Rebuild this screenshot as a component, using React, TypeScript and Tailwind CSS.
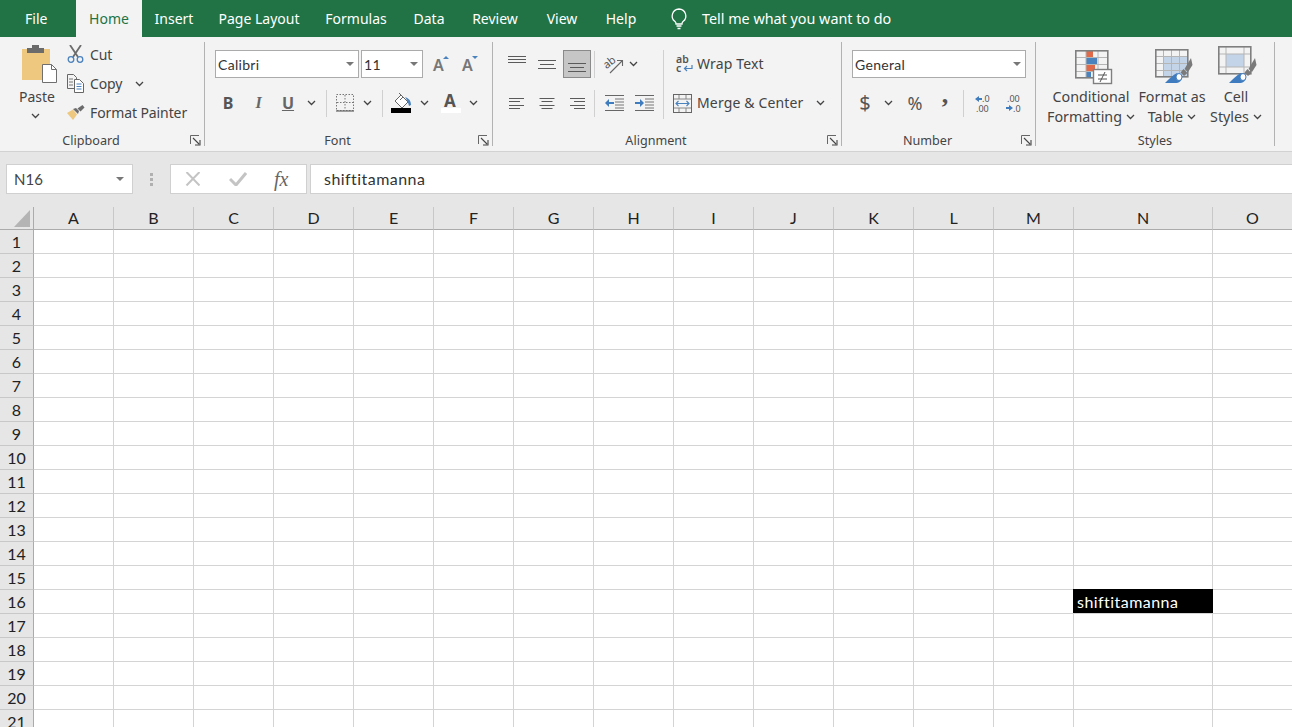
import React from "react";

const ui = "font-['Noto_Sans','Open_Sans',sans-serif]";
const cal = "font-['Lato','Liberation_Sans',sans-serif]";

const Chev = ({ c = "" }: { c?: string }) => (
  <svg width="9" height="6" viewBox="0 0 9 6" className={c}>
    <path d="M1 1l3.5 3.5L8 1" fill="none" stroke="#444" strokeWidth="1.3" />
  </svg>
);

const Launcher = () => (
  <svg width="11" height="11" viewBox="0 0 11 11" className="absolute right-[3px] bottom-[5px]">
    <path d="M.5 9V.5H9" fill="none" stroke="#666" />
    <path d="M3 3l6 6M10 5v5H5" fill="none" stroke="#444" strokeWidth="1.1" />
  </svg>
);

const Label = ({ children, c = "pr-[22px]" }: { children: React.ReactNode; c?: string }) => (
  <div className={`absolute left-0 right-0 bottom-[1px] h-[18px] text-center text-[12.600px] leading-[18px] text-[#444] tracking-normal ${c}`}>{children}</div>
);

const Caret = () => <div className="w-0 h-0 border-l-[4px] border-r-[4px] border-t-[4px] border-l-transparent border-r-transparent border-t-[#777]" />;

const Lines = ({ widths, y, step = 4, x = "l" }: { widths: number[]; y: number; step?: number; x?: "l" | "c" | "r" }) => (
  <svg width="20" height="22" viewBox="0 0 20 22">
    {widths.map((w, i) => {
      const x1 = x === "l" ? 2 : x === "c" ? 10 - w / 2 : 18 - w;
      return <rect key={i} x={x1} y={Math.round(y + i * step)} width={w} height="1" fill="#5a5a5a" />;
    })}
  </svg>
);

const Sep = () => <div className="w-px h-[27px] bg-[#d0d0d0]" />;

const Paste = () => (
  <svg width="36" height="40" viewBox="0 0 36 40">
    <rect x="0" y="5" width="28" height="31" fill="#edc87e" />
    <path d="M5 9V4h5V1h7v3h5v5z" fill="#6b6b6b" />
    <path d="M20.5 20.5h9l5 5v13h-14z" fill="#fff" stroke="#6f6f6f" />
    <path d="M29.5 20.5v5h5" fill="none" stroke="#6f6f6f" />
  </svg>
);

const Scissors = () => (
  <svg width="18" height="19" viewBox="0 0 18 19">
    <path d="M3 0l8 12M14 0L6 12" stroke="#6c6c6c" strokeWidth="1.8" fill="none" />
    <circle cx="4" cy="14.5" r="2.8" fill="none" stroke="#4a82bd" strokeWidth="1.3" />
    <circle cx="13" cy="14.5" r="2.8" fill="none" stroke="#4a82bd" strokeWidth="1.3" />
  </svg>
);

const Copy = () => (
  <svg width="18" height="19" viewBox="0 0 18 19">
    <path d="M.5.5h6l3 3v11H.5z" fill="#f3f3f3" stroke="#666" />
    <path d="M2 5h4M2 8h4M2 11h4" stroke="#777" />
    <path d="M7.5 5.5h5l4 4v9h-9z" fill="#fff" stroke="#666" />
    <path d="M9.5 10h5M9.5 12.5h5M9.5 15h5" stroke="#4a82bd" />
  </svg>
);

const Brush = () => (
  <svg width="18" height="15" viewBox="0 0 18 15">
    <path d="M0 8l6-3.5 4 5L6 15z" fill="#edc87e" />
    <path d="M6 4l3-1 3 3-1 3z" fill="#6b6b6b" />
    <path d="M10.5 3.5l5-3.5 2 2.5-4 4z" fill="#6b6b6b" />
  </svg>
);

const Bulb = () => (
  <svg width="18" height="22" viewBox="0 0 18 22">
    <path d="M9 1a7 7 0 0 0-4 12.6c.8.7 1 1.4 1 2.4h6c0-1 .2-1.7 1-2.4A7 7 0 0 0 9 1z" fill="none" stroke="#fff" strokeWidth="1.3" />
    <path d="M6.5 18h5M7.5 20.5h3" stroke="#fff" strokeWidth="1.3" />
  </svg>
);

const FontBig = ({ up }: { up: boolean }) => (
  <svg width="20" height="18" viewBox="0 0 20 18" className="overflow-visible">
    <text x="2" y="16" fontSize="16" fontWeight="600" fontFamily="Noto Sans" fill="#777">A</text>
    <path d={up ? "M12 4l3-3 3 3z" : "M12 1l3 3 3-3z"} fill="#4a82bd" />
  </svg>
);

const Borders = () => (
  <svg width="18" height="18" viewBox="0 0 18 18">
    <rect x=".5" y=".5" width="17" height="16" fill="none" stroke="#777" strokeDasharray="1.5 1.5" />
    <path d="M9 1v15M1 8.5h16" stroke="#777" strokeDasharray="1.5 1.5" />
    <path d="M0 17h18" stroke="#666" strokeWidth="1.2" />
  </svg>
);

const Fill = () => (
  <svg width="22" height="21" viewBox="0 0 22 21">
    <path d="M4 8l6-6 7 7-6 6z" fill="#fff" stroke="#666" />
    <path d="M10 2L8 0M12 4l-3 3" stroke="#666" />
    <path d="M14 4c3 1 6 3 6 8l-2 1c-1-4-2-6-4-9z" fill="#4a82bd" />
    <rect x="0" y="15" width="20" height="5" fill="#000" />
  </svg>
);

const FontColor = () => (
  <svg width="20" height="21" viewBox="0 0 20 21" className="overflow-visible">
    <text x="3" y="14" fontSize="17" fontWeight="700" fontFamily="Noto Sans" fill="#555">A</text>
    <rect x="0" y="15" width="20" height="5" fill="#fff" />
  </svg>
);

const Orient = () => (
  <svg width="20" height="20" viewBox="0 0 20 20" className="overflow-visible">
    <text x="0" y="12" fontSize="11" fontFamily="Noto Sans" fill="#555" transform="rotate(-38 6 10)">ab</text>
    <path d="M6 19L18 7M13 6.500h5.500V12" fill="none" stroke="#666" strokeWidth="1.1" />
  </svg>
);

const Wrap = () => (
  <svg width="18" height="18" viewBox="0 0 18 18" className="overflow-visible">
    <text x="0" y="8" fontSize="10.500" fontFamily="Noto Sans" fontWeight="600" fill="#555">ab</text>
    <text x="0" y="17" fontSize="10.500" fontFamily="Noto Sans" fontWeight="600" fill="#555">c</text>
    <path d="M16 10v3.500H9M11 11l-2.500 2.500L11 16" fill="none" stroke="#4a82bd" strokeWidth="1.2" />
  </svg>
);

const Merge = () => (
  <svg width="19" height="19" viewBox="0 0 19 19">
    <rect x=".5" y=".5" width="18" height="18" fill="none" stroke="#666" />
    <path d="M1 5h17M1 14h17M6 1v4M13 1v4M6 14v4M13 14v4" stroke="#888" />
    <path d="M3 9.500h13M5.500 7L3 9.500 5.500 12M13.500 7l2.500 2.500-2.500 2.500" fill="none" stroke="#4a82bd" strokeWidth="1.1" />
  </svg>
);

const Indent = ({ right }: { right: boolean }) => (
  <svg width="19" height="16" viewBox="0 0 19 16">
    <path d="M0 .5h19M0 15.500h19" stroke="#666" />
    <path d="M10 4h9M10 7h9M10 10h9M10 13h9" stroke="#777" />
    <path d={right ? "M0 7h5V4l4 4-4 4V9H0z" : "M9 7H4V4L0 8l4 4V9h5z"} fill="#3f7cbf" />
  </svg>
);

const Dec = ({ inc }: { inc: boolean }) => (
  <svg width="16" height="19" viewBox="0 0 16 19" className="overflow-visible">
    {inc ? (
      <>
        <path d="M0 5l4-3v2h3v2H4v2z" fill="#3f7cbf" />
        <text x="7" y="8" fontSize="9" fontFamily="Noto Sans" fill="#555">.0</text>
        <text x="1" y="18" fontSize="9" fontFamily="Noto Sans" fill="#555">.00</text>
      </>
    ) : (
      <>
        <text x="2" y="8" fontSize="9" fontFamily="Noto Sans" fill="#555">.00</text>
        <path d="M8 14l-4-3v2H1v2h3v2z" fill="#3f7cbf" />
        <text x="8" y="18" fontSize="9" fontFamily="Noto Sans" fill="#555">.0</text>
      </>
    )}
  </svg>
);

const CondFmt = () => (
  <svg width="38" height="36" viewBox="0 0 38 36">
    <rect x="11" y="1" width="7" height="6" fill="#e0694a" />
    <rect x="11" y="8" width="11" height="6" fill="#4a82bd" />
    <rect x="11" y="15" width="9" height="6" fill="#e0694a" />
    <rect x="11" y="22" width="5" height="6" fill="#4a82bd" />
    <path d="M1 7.500h32M1 14.500h32M1 21.500h32M11 1v27M23 1v27" stroke="#b5b5b5" />
    <rect x=".8" y=".8" width="32" height="27" fill="none" stroke="#7f7f7f" strokeWidth="1.6" />
    <rect x="18.500" y="19.500" width="18" height="14" fill="#fff" stroke="#7f7f7f" strokeWidth="1.4" />
    <path d="M23 25h9M23 29h9M30 22l-5 10" stroke="#555" strokeWidth="1" />
  </svg>
);

const Paint = () => (
  <>
    <path d="M10 34c4-4 8-8 12-10l5 4c0 4-3 6-7 6z" fill="#3f7cbf" />
    <ellipse cx="24" cy="28" rx="3" ry="3.500" fill="#fff" stroke="#3f7cbf" />
    <path d="M25.500 23.500l3-3.500 4 4-3.500 3z" fill="#7a7a7a" />
    <path d="M29.500 20L36 9l1.500 7-4.500 7z" fill="#7a7a7a" />
  </>
);

const FmtTable = () => (
  <svg width="38" height="36" viewBox="0 0 38 36">
    <rect x="8" y="7" width="25" height="21" fill="#c3d4e8" />
    <path d="M1 7.500h32M1 14.500h32M1 21.500h32M8.500 1v27M16.500 1v27M24.500 1v27" stroke="#b5b5b5" />
    <rect x=".8" y=".8" width="32" height="27" fill="none" stroke="#7f7f7f" strokeWidth="1.6" />
    <Paint />
  </svg>
);

const CellSt = () => (
  <svg width="40" height="38" viewBox="0 0 40 38">
    <rect x="8" y="8" width="18" height="13" fill="#c3d4e8" />
    <path d="M1 8h32M1 21h32M8 1v27M26 1v27" stroke="#b5b5b5" />
    <rect x=".8" y=".8" width="32" height="27" fill="none" stroke="#7f7f7f" strokeWidth="1.6" />
    <g transform="translate(1 3)"><Paint /></g>
  </svg>
);

const Combo = ({ text, w }: { text: string; w: string }) => (
  <div className={`${w} h-[28px] bg-white border border-[#ababab] flex items-center justify-between pl-[2px] pr-[4px] text-[14px] tracking-[0.3px] text-[#333] ${cal}`}>
    <span>{text}</span>
    <Caret />
  </div>
);

const Row = ({ children, c = "" }: { children: React.ReactNode; c?: string }) => <div className={`flex items-center h-[28px] ${c}`}>{children}</div>;

const Slot = ({ w, children, c = "" }: { w: string; children: React.ReactNode; c?: string }) => (
  <div className={`${w} h-[28px] flex items-center justify-center shrink-0 ${c}`}>{children}</div>
);

const GroupSep = () => <div className="w-px h-[104px] mt-[5px] bg-[#b2b2b2] shrink-0" />;

const tabs = [
  ["File", "w-[76px] pl-[25px] text-left"],
  ["Home", "w-[66px] text-center bg-[#f3f3f3] text-[#217346]"],
  ["Insert", "w-[64px] text-center"],
  ["Page Layout", "w-[106px] text-center"],
  ["Formulas", "w-[88px] text-center"],
  ["Data", "w-[58px] text-center"],
  ["Review", "w-[74px] text-center"],
  ["View", "w-[60px] text-center"],
  ["Help", "w-[58px] text-center"],
];

const colNames = ["A", "B", "C", "D", "E", "F", "G", "H", "I", "J", "K", "L", "M", "N", "O"];
const rows = Array.from({ length: 21 }, (_, i) => i + 1);

function Ribbon() {
  return (
    <div className="flex h-[115px] bg-[#f3f3f3] border-b border-[#d2d2d2] text-[14px] text-[#444]">
      {/* Clipboard */}
      <div className="relative w-[204px] shrink-0 flex">
        <div className="w-[67px] pl-[19px] pt-[7px] flex flex-col items-start shrink-0">
          <div className="pl-[3px] h-[43px]"><Paste /></div>
          <div className="w-[34px] text-center leading-[20px]">Paste</div>
          <Chev c="ml-[12px] mt-[6px]" />
        </div>
        <div className="flex flex-col pt-[3px] tracking-[-0.1px]">
          <div className="flex items-center gap-[5px] h-[29px]"><Scissors /><span>Cut</span></div>
          <div className="flex items-center gap-[5px] h-[29px]"><Copy /><span>Copy</span><Chev c="ml-[8px]" /></div>
          <div className="flex items-center gap-[5px] h-[29px]"><Brush /><span>Format Painter</span></div>
        </div>
        <Label>Clipboard</Label>
        <Launcher />
      </div>
      <GroupSep />
      {/* Font */}
      <div className="relative w-[287px] shrink-0 pt-[13px] pl-[10px]">
        <Row>
          <Combo text="Calibri" w="w-[144px]" />
          <Combo text="11" w="w-[62px] ml-[2px]" />
          <Slot w="w-[30px]" c="ml-[3px]"><FontBig up /></Slot>
          <Slot w="w-[28px]"><FontBig up={false} /></Slot>
        </Row>
        <Row c="mt-[11px] -ml-[2px]">
          <Slot w="w-[30px]"><span className="font-bold text-[16px] text-[#555]">B</span></Slot>
          <Slot w="w-[31px]"><span className="italic font-bold text-[16px] text-[#666] font-['Liberation_Serif']">I</span></Slot>
          <Slot w="w-[28px]"><span className="font-bold text-[16px] text-[#666] underline">U</span></Slot>
          <Slot w="w-[18px]"><Chev /></Slot>
          <div className="ml-[6px]"><Sep /></div>
          <Slot w="w-[18px]" c="ml-[9px]"><Borders /></Slot>
          <Slot w="w-[26px]"><Chev /></Slot>
          <div className="ml-[2px]"><Sep /></div>
          <Slot w="w-[22px]" c="ml-[8px]"><Fill /></Slot>
          <Slot w="w-[22px]"><Chev /></Slot>
          <Slot w="w-[20px]" c="ml-[6px]"><FontColor /></Slot>
          <Slot w="w-[24px]"><Chev /></Slot>
        </Row>
        <Label>Font</Label>
        <Launcher />
      </div>
      <GroupSep />
      {/* Alignment */}
      <div className="relative w-[348px] shrink-0 pt-[13px] flex">
        <div className="pl-[13px] w-[170px] shrink-0">
          <Row>
            <Slot w="w-[22px]"><Lines widths={[18, 18, 18]} y={3} step={3} x="c" /></Slot>
            <Slot w="w-[8px]"><span /></Slot>
            <Slot w="w-[22px]"><Lines widths={[18, 14, 18]} y={7} x="c" /></Slot>
            <Slot w="w-[28px]" c="ml-[5px] bg-[#c6c6c6] border border-[#8a8a8a]"><Lines widths={[18, 14, 18]} y={10} x="c" /></Slot>
            <div className="ml-[3px]"><Sep /></div>
            <Slot w="w-[20px]" c="ml-[9px]"><Orient /></Slot>
            <Slot w="w-[18px]"><Chev /></Slot>
          </Row>
          <Row c="mt-[11px]">
            <Slot w="w-[22px]"><Lines widths={[15, 11, 15, 11]} y={6} step={3.33} x="l" /></Slot>
            <Slot w="w-[8px]"><span /></Slot>
            <Slot w="w-[22px]"><Lines widths={[15, 11, 15, 11]} y={6} step={3.33} x="c" /></Slot>
            <Slot w="w-[28px]" c="ml-[5px]"><Lines widths={[15, 11, 15, 11]} y={6} step={3.33} x="r" /></Slot>
            <div className="ml-[3px]"><Sep /></div>
            <Slot w="w-[20px]" c="ml-[9px]"><Indent right={false} /></Slot>
            <Slot w="w-[20px]" c="ml-[10px]"><Indent right /></Slot>
          </Row>
        </div>
        <div className="w-px h-[69px] bg-[#d0d0d0] shrink-0" />
        <div className="pl-[9px] tracking-[0.15px]">
          <Row>
            <Slot w="w-[18px]" c="ml-[3px]"><Wrap /></Slot>
            <span className="ml-[3px] pb-[1px]">Wrap Text</span>
          </Row>
          <Row c="mt-[11px]">
            <Slot w="w-[19px]"><Merge /></Slot>
            <span className="ml-[5px] pb-[1px]">Merge &amp; Center</span>
            <Chev c="ml-[12px]" />
          </Row>
        </div>
        <Label>Alignment</Label>
        <Launcher />
      </div>
      <GroupSep />
      {/* Number */}
      <div className="relative w-[193px] shrink-0 pt-[13px] pl-[10px]">
        <Combo text="General" w="w-[174px]" />
        <Row c="mt-[11px]">
          <Slot w="w-[26px]"><span className="text-[20px] text-[#555]">$</span></Slot>
          <Slot w="w-[20px]"><Chev /></Slot>
          <Slot w="w-[34px]"><span className="text-[18px] text-[#555]">%</span></Slot>
          <Slot w="w-[24px]" c="pl-[2px]"><span className="text-[26px] font-bold text-[#555] leading-[20px] pb-[16px] font-['Liberation_Serif']">,</span></Slot>
          <div className="ml-[7px]"><Sep /></div>
          <Slot w="w-[16px]" c="ml-[11px]"><Dec inc /></Slot>
          <Slot w="w-[16px]" c="ml-[14px]"><Dec inc={false} /></Slot>
        </Row>
        <Label>Number</Label>
        <Launcher />
      </div>
      <GroupSep />
      {/* Styles */}
      <div className="relative w-[238px] shrink-0 flex pt-[8px] leading-[20px] text-center text-[14.300px]">
        <div className="w-[102px] pl-[8px] shrink-0 flex flex-col items-center">
          <div className="h-[41px] pt-[5px] pl-[6px]"><CondFmt /></div>
          <div className="mt-[1px]">Conditional</div>
          <div className="flex items-center gap-[4px]">Formatting <Chev /></div>
        </div>
        <div className="w-[68px] shrink-0 flex flex-col items-center">
          <div className="h-[41px] pt-[4px] pl-[4px]"><FmtTable /></div>
          <div className="mt-[1px]">Format as</div>
          <div className="flex items-center gap-[4px]">Table <Chev /></div>
        </div>
        <div className="w-[60px] shrink-0 flex flex-col items-center">
          <div className="h-[41px] pt-[1px] pl-[3px]"><CellSt /></div>
          <div className="mt-[1px]">Cell</div>
          <div className="flex items-center gap-[4px]">Styles <Chev /></div>
        </div>
        <Label c="">Styles</Label>
      </div>
      <GroupSep />
    </div>
  );
}

function FormulaBar() {
  return (
    <div className="h-[55px] bg-[#e6e6e6] flex items-start pt-[12px]">
      <div className={`ml-[6px] w-[127px] h-[30px] bg-white border border-[#d0d0d0] flex items-center justify-between pl-[7px] pr-[8px] text-[15px] text-[#444] ${cal}`}>
        <span>N16</span>
        <Caret />
      </div>
      <div className="w-[37px] h-[30px] flex flex-col items-center justify-center gap-[2px] shrink-0">
        <i className="w-[3px] h-[3px] bg-[#b0b0b0]" />
        <i className="w-[3px] h-[3px] bg-[#b0b0b0]" />
        <i className="w-[3px] h-[3px] bg-[#b0b0b0]" />
      </div>
      <div className="w-[137px] h-[30px] bg-white border border-[#d0d0d0] flex items-center shrink-0">
        <svg width="16" height="14" viewBox="0 0 16 14" className="ml-[14px]">
          <path d="M1.500 0l13 13.500M14.500 0l-13 13.500" stroke="#c4c4c4" strokeWidth="2" />
        </svg>
        <svg width="18" height="14" viewBox="0 0 18 14" className="ml-[28px]">
          <path d="M1 7l6 6L17 1" fill="none" stroke="#c4c4c4" strokeWidth="3" />
        </svg>
        <span className="ml-[27px] italic text-[20px] leading-none text-[#666] font-['Liberation_Serif']">fx</span>
      </div>
      <div className={`ml-[3px] flex-1 h-[30px] bg-white border-y border-l border-[#d0d0d0] flex items-center pl-[13px] text-[16px] tracking-[0.45px] text-[#333] ${cal}`}>
        shiftitamanna
      </div>
    </div>
  );
}

function Sheet() {
  return (
    <div className={`grid grid-cols-[34px_repeat(13,80px)_139px_80px] grid-rows-[23px] auto-rows-[24px] ${cal} text-[16px] text-[#222]`}>
      <div className="relative bg-[#e6e6e6] border-r border-b border-[#ababab]">
        <div className="absolute right-[3px] bottom-[2px] w-0 h-0 border-b-[17px] border-l-[16px] border-b-[#b4b4b4] border-l-transparent" />
      </div>
      {colNames.map((c) => (
        <div key={c} className="bg-[#e6e6e6] border-r border-b border-r-[#c8c8c8] border-b-[#ababab] flex items-center justify-center">{c}</div>
      ))}
      {rows.map((r) => (
        <React.Fragment key={r}>
          <div className="bg-[#e6e6e6] border-r border-b border-r-[#ababab] border-b-[#c8c8c8] flex items-center justify-center">{r}</div>
          {colNames.map((c) => (
            <div key={c} className="relative bg-white border-r border-b border-[#d4d4d4]">
              {r === 16 && c === "N" && (
                <div className="absolute -left-px -top-px -right-px bottom-0 bg-black text-white flex items-center pl-[4px] pt-[1px] tracking-[0.45px]">shiftitamanna</div>
              )}
            </div>
          ))}
        </React.Fragment>
      ))}
    </div>
  );
}

export default function App() {
  return (
    <div className={`w-[1292px] h-[727px] overflow-hidden bg-white ${ui}`}>
      <div className="h-[37px] bg-[#217346] flex items-stretch text-white text-[14px] leading-[37px]">
        {tabs.map(([t, c]) => (
          <div key={t} className={c}>{t}</div>
        ))}
        <div className="ml-[20px] w-[32px] flex items-center"><Bulb /></div>
        <div className="text-[14.350px]">Tell me what you want to do</div>
      </div>
      <Ribbon />
      <FormulaBar />
      <Sheet />
    </div>
  );
}
